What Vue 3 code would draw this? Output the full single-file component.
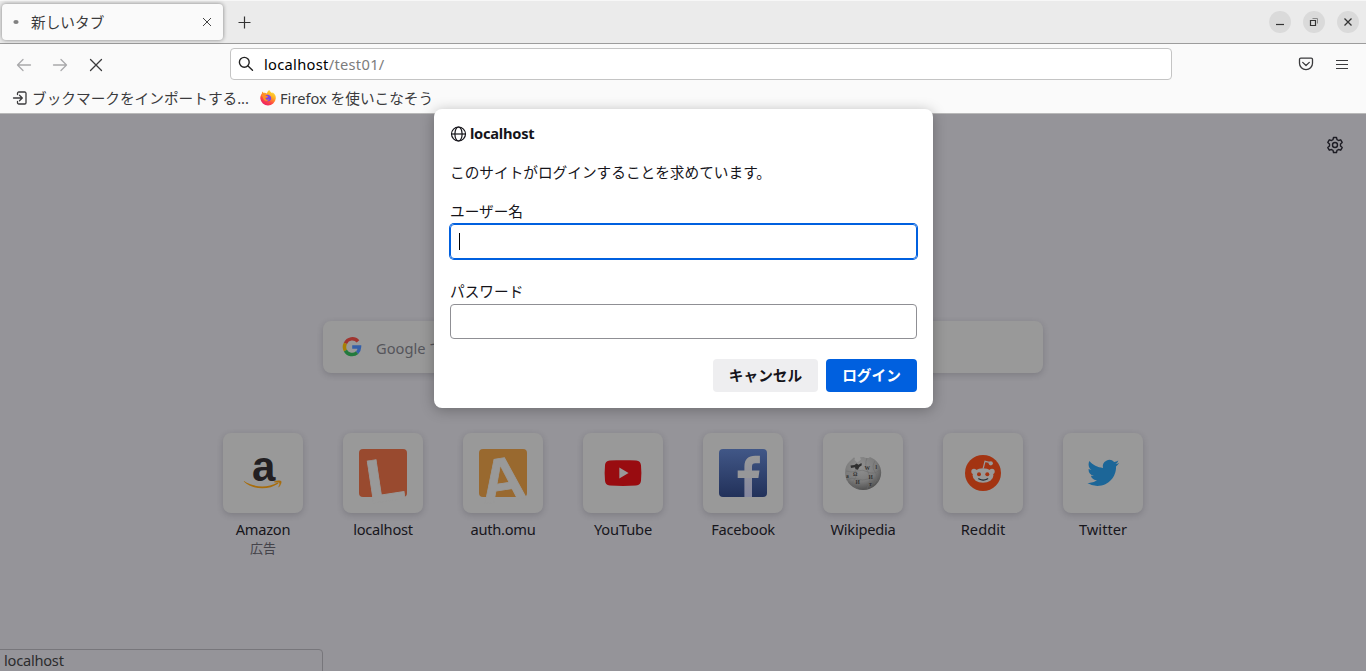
<script setup>
const sites = [
  { id: 'amazon', label: 'Amazon', note: '広告' },
  { id: 'local', label: 'localhost' },
  { id: 'auth', label: 'auth.omu' },
  { id: 'youtube', label: 'YouTube' },
  { id: 'facebook', label: 'Facebook' },
  { id: 'wikipedia', label: 'Wikipedia' },
  { id: 'reddit', label: 'Reddit' },
  { id: 'twitter', label: 'Twitter' },
]
</script>

<template>
  <div class="window">
    <header class="tabbar">
      <div class="tab">
        <svg class="dot" width="8" height="8" viewBox="0 0 8 8"><ellipse cx="4" cy="4" rx="2.600" ry="1.900" fill="#808080" /></svg>
        <span class="tab-title">新しいタブ</span>
        <svg width="10" height="10" viewBox="0 0 10 10" fill="none" stroke="#444" stroke-width="1"><path d="M1 1l8 8M9 1L1 9" /></svg>
      </div>
      <svg class="newtab" width="13" height="13" viewBox="0 0 13 13" fill="none" stroke="#333" stroke-width="1.200"><path d="M6.500 .5v12M.5 6.500h12" /></svg>
      <div class="controls">
        <span class="ctl"><svg width="10" height="10" viewBox="0 0 10 10" stroke="#333" stroke-width="1.200"><path d="M1 7.500h8" /></svg></span>
        <span class="ctl"><svg width="10" height="10" viewBox="0 0 10 10" fill="none" stroke="#333"><path d="M3.500 1.500h5v5" stroke="#888" /><path d="M1.500 3.500h5v5h-5z" stroke-width="1.200" /></svg></span>
        <span class="ctl"><svg width="10" height="10" viewBox="0 0 10 10" fill="none" stroke="#333" stroke-width="1.300"><path d="M1.500 1.500l7 7M8.500 1.500l-7 7" /></svg></span>
      </div>
    </header>

    <div class="navbar">
      <svg class="back" width="16" height="16" viewBox="0 0 16 16" fill="none" stroke="#a9a9ab" stroke-width="1.300" stroke-linecap="round" stroke-linejoin="round"><path d="M14.500 8H1.500M7 2.500L1.500 8 7 13.500" /></svg>
      <svg class="forward" width="16" height="16" viewBox="0 0 16 16" fill="none" stroke="#a9a9ab" stroke-width="1.300" stroke-linecap="round" stroke-linejoin="round"><path d="M1.500 8h13M9 2.500L14.500 8 9 13.500" /></svg>
      <svg class="stop" width="14" height="14" viewBox="0 0 14 14" fill="none" stroke="#3a3a3c" stroke-width="1.300" stroke-linecap="round"><path d="M1.500 1.500l11 11M12.500 1.500l-11 11" /></svg>
      <div class="urlbar">
        <svg width="16" height="16" viewBox="0 0 16 16" fill="none" stroke="#222" stroke-width="1.400" stroke-linecap="round"><circle cx="6.300" cy="6.300" r="4.900" /><path d="M10 10l4.500 4.300" /></svg>
        <span class="url"><b>localhost</b>/test01/</span>
      </div>
      <svg class="pocket" width="16" height="16" viewBox="0 0 16 16" fill="none" stroke="#3a3a3c" stroke-width="1.300" stroke-linecap="round" stroke-linejoin="round"><path d="M2.800 2.100h10.400a1.300 1.300 0 0 1 1.300 1.300v3.800a6.500 6.500 0 0 1-13 0V3.400a1.300 1.300 0 0 1 1.300-1.300z" /><path d="M4.700 6.400L8 9.500l3.300-3.100" /></svg>
      <svg class="menu" width="14" height="12" viewBox="0 0 14 12" stroke="#3a3a3c" stroke-width="1.200"><path d="M1 1.500h12M1 5.500h12M1 9.500h12" /></svg>
    </div>

    <div class="bookmarks">
      <svg class="import" width="16" height="16" viewBox="0 0 16 16" fill="none" stroke="#3a3a3c" stroke-width="1.300" stroke-linecap="round" stroke-linejoin="round"><path d="M5.500 4.500V3.300a1.300 1.300 0 0 1 1.300-1.300h5.900A1.300 1.300 0 0 1 14 3.300v9.400a1.300 1.300 0 0 1-1.300 1.300H6.800a1.300 1.300 0 0 1-1.300-1.300v-1.200M1.500 8h8.500M7.500 5.300L10.300 8l-2.800 2.700" /></svg>
      <span class="bm-import">ブックマークをインポートする...</span>
      <svg class="fox" width="16" height="16" viewBox="0 0 16 16">
        <defs><linearGradient id="fx" x1=".8" y1="0" x2=".2" y2="1"><stop offset="0" stop-color="#ffe93b" /><stop offset=".35" stop-color="#ffad22" /><stop offset=".65" stop-color="#ff4f40" /><stop offset="1" stop-color="#e8146f" /></linearGradient></defs>
        <path d="M9.400 0c.4 1.500 1.700 2.300 2.800 3.200l.4-.9c2.600 1.900 3.400 4 3.200 6.300a7.800 7.800 0 0 1-15.500-.1C.2 6.300 1 4.500 1.900 3.400l.2-1.800 1.700 1.300c1.200-.2 2.200 0 3.100.5C7.400 1.800 8.200.6 9.400 0z" fill="url(#fx)" />
        <path d="M5.300 5.500c1-.8 2.300-.9 3.500-.4 1.900.7 2.700 2.100 2.300 3.900-.5 1.900-2.700 2.800-4.700 2.100C4.600 10.400 3.700 8.800 4.200 7l2.300.7c1.300-.1 2-.7 1-1.100z" fill="#7c45e5" />
        <path d="M1.200 5c1.700-.7 2.900-.2 4.100.6l2.500.7c-.2.9-1.500 1.100-2.300 1.700.1 1.600 2 2.300 3.700 1.300-1 1.900-3.700 2.200-5.100.7C2.900 8.700 3.200 6.900 1.200 5z" fill="#ff9123" />
      </svg>
      <span class="bm-fox">Firefox を使いこなそう</span>
    </div>

    <main class="page">
      <svg class="gear" width="18" height="18" viewBox="0 0 18 18" fill="none" stroke="#1d1c24" stroke-width="1.400" stroke-linejoin="round"><path d="M7.500 1.500h3l.5 2.200 1.500.8 2.200-.7 1.500 2.600-1.700 1.500v2.200l1.700 1.500-1.500 2.600-2.200-.7-1.500.8-.5 2.200h-3L7 14.300l-1.500-.8-2.200.7-1.500-2.600 1.700-1.500V7.900L1.800 6.400l1.500-2.600 2.200.7L7 3.700z" /><circle cx="9" cy="9" r="2.500" /></svg>

      <div class="search">
        <svg width="20" height="20" viewBox="0 0 20 20" fill="none" stroke-width="3.500">
          <path d="M16 4.400A7.500 7.500 0 0 0 3.400 6.400" stroke="#a03530" />
          <path d="M3.400 6.400a7.500 7.500 0 0 0 0 7.200" stroke="#a88004" />
          <path d="M3.400 13.600A7.500 7.500 0 0 0 15.100 15.600" stroke="#237a3d" />
          <path d="M15.100 15.600c1.500-1.300 2.300-3 2.400-5.600H10.200" stroke="#345fa8" />
        </svg>
        <span>Google で</span>
      </div>

      <div class="sites">
        <div v-for="s in sites" :key="s.id" class="site">
          <div class="tile">
            <svg v-if="s.id === 'amazon'" class="logo" width="48" height="48" viewBox="0 0 48 48">
              <text class="amz" x="24.800" y="31.700" text-anchor="middle">a</text>
              <path d="M5 32c10 6.500 23 7.500 33.500 1.500l1 1C29 41.500 14 41 4.800 32.500z" fill="#a86d0c" />
              <path d="M35.500 32.600c2.500-1.200 6-1.100 6.600-.3.500.8-.3 3.800-2.500 5.900 1-2.500 1.400-3.900.8-4.500-.6-.6-2.800-.6-4.900-.5z" fill="#a86d0c" stroke="#a86d0c" stroke-width=".4" />
            </svg>
            <svg v-else-if="s.id === 'local'" class="logo" width="48" height="48" viewBox="0 0 48 48">
              <rect width="48" height="48" rx="4" fill="#994a2f" />
              <g transform="translate(8.200 12) rotate(-8.600)"><text class="mark" x="-4.200" y="42.700">L</text></g>
            </svg>
            <svg v-else-if="s.id === 'auth'" class="logo" width="48" height="48" viewBox="0 0 48 48">
              <rect width="48" height="48" rx="4" fill="#99692f" />
              <g transform="translate(20.300 9.500) rotate(-8.600)"><text class="mark" y="42.700" text-anchor="middle">A</text></g>
            </svg>
            <svg v-else-if="s.id === 'youtube'" width="48" height="48" viewBox="0 0 48 48">
              <path d="M11 11.600c8-.6 18-.6 26 0 3.500.3 4.700 2 5 5 .5 5 .5 10 0 15-.3 3-1.500 4.700-5 5-8 .6-18 .6-26 0-3.500-.3-4.700-2-5-5-.5-5-.5-10 0-15 .3-3 1.500-4.700 5-5z" fill="#990c10" />
              <path d="M20.300 18.600v11l9.300-5.500z" fill="#999" />
            </svg>
            <svg v-else-if="s.id === 'facebook'" class="rounded" width="48" height="48" viewBox="0 0 48 48">
              <defs>
                <linearGradient id="fb" x2="0" y2="1"><stop offset="0" stop-color="#415787" /><stop offset="1" stop-color="#22315a" /></linearGradient>
                <linearGradient id="fw" gradientUnits="userSpaceOnUse" x1="0" y1="7" x2="0" y2="48"><stop offset="0" stop-color="#999" /><stop offset="1" stop-color="#8587a0" /></linearGradient>
              </defs>
              <rect width="48" height="48" fill="url(#fb)" />
              <path d="M29.200 49V17.500q0-7 7-7h4.700" fill="none" stroke="url(#fw)" stroke-width="7.600" />
              <path d="M18.700 21.600h21.800l-1.100 7.500H18.700z" fill="#979799" />
            </svg>
            <svg v-else-if="s.id === 'wikipedia'" width="48" height="48" viewBox="0 0 48 48">
              <defs><radialGradient id="wk" cx=".42" cy=".3" r=".75"><stop offset="0" stop-color="#919191" /><stop offset=".6" stop-color="#7b7b7b" /><stop offset="1" stop-color="#494949" /></radialGradient></defs>
              <path d="M10.500 12.500l4-3.800c1.300-.7 1.900.8.900 2.200l3 2.500 3.600-2.800-1-2.400 3.500-.2c1.800 1.500 5.300 1.500 6.500-.1 6.700 2.700 11.200 8.500 11.200 15.500A17.700 17.700 0 0 1 24 41 17.900 17.900 0 0 1 6 23.700c0-5 1.500-8.500 4.500-11.200z" fill="url(#wk)" />
              <path d="M11.500 16.500l4-.5 2-1.500 2 1.200 3-1.800.3 2.400-2.500 1.700-1.300 2.800-2.500-.5-.5-2-4 .8z" fill="#303030" />
              <path d="M7 22q5 2 11 0t11 1 12-2M7 31q5-3 11-1t11 0 10 2M16 21q3 5-1 10t4 9M28 9q-3 7 1 14t-1 17M36 12q-4 6 0 11t-1 12" fill="none" stroke="#6a6a6a" stroke-width=".5" />
              <g class="runes"><text x="14" y="26.500">Ω</text><text x="25.500" y="21">W</text><text x="29.500" y="30">И</text><text x="16.500" y="35">И</text><text x="7" y="29">a</text><text x="30" y="37">т</text><text x="36.500" y="20">l</text></g>
            </svg>
            <svg v-else-if="s.id === 'reddit'" width="48" height="48" viewBox="0 0 48 48">
              <circle cx="24" cy="24" r="18" fill="#a33412" />
              <g fill="#999"><circle cx="15" cy="22.500" r="2.700" /><circle cx="33" cy="22.500" r="2.700" /><ellipse cx="24" cy="26.500" rx="10.400" ry="7.300" /><circle cx="31.800" cy="14.300" r="2.100" /></g>
              <path d="M24.200 19.500L26 12.300l5.500 1.400" fill="none" stroke="#999" stroke-width="1.200" />
              <circle cx="20" cy="25.300" r="2" fill="#a33412" /><circle cx="28.300" cy="25.300" r="2" fill="#a33412" />
              <path d="M19.700 29.800q4.500 2.600 9 0" fill="none" stroke="#1d2830" stroke-width="1.200" stroke-linecap="round" />
            </svg>
            <svg v-else width="48" height="48" viewBox="0 0 48 48">
              <svg x="8.300" y="7.900" width="32" height="32" viewBox="0 0 24 24"><path d="M23.950 4.570a10 10 0 0 1-2.820.77 4.960 4.960 0 0 0 2.160-2.720c-.95.550-2 .950-3.130 1.180a4.920 4.920 0 0 0-8.380 4.480C7.690 8.090 4.070 6.130 1.640 3.160a4.820 4.820 0 0 0-.67 2.480c0 1.710.87 3.210 2.190 4.100a4.900 4.900 0 0 1-2.230-.62v.06a4.920 4.920 0 0 0 3.950 4.830 4.990 4.990 0 0 1-2.210.080 4.940 4.940 0 0 0 4.600 3.420A9.870 9.870 0 0 1 0 19.540a13.990 13.990 0 0 0 7.560 2.210c9.050 0 14-7.500 14-13.980 0-.21 0-.42-.020-.63a9.940 9.940 0 0 0 2.410-2.570z" fill="#1c6698" /></svg>
            </svg>
          </div>
          <span class="label" :class="'l-' + s.id">{{ s.label }}</span>
          <span v-if="s.note" class="note">{{ s.note }}</span>
        </div>
      </div>
      <div class="status">localhost</div>
    </main>

    <section class="dialog">
      <div class="host">
        <svg width="17" height="16" viewBox="0 0 17 16" fill="none" stroke="#15141a" stroke-width="1.200"><circle cx="8.500" cy="8" r="7" /><ellipse cx="8.500" cy="8" rx="3.600" ry="7" /><path d="M1.500 8h14" /></svg>
        <span>localhost</span>
      </div>
      <p class="message">このサイトがログインすることを求めています。</p>
      <div class="field-label">ユーザー名</div>
      <div class="field focused"><span class="caret"></span></div>
      <div class="field-label second">パスワード</div>
      <div class="field"></div>
      <div class="actions">
        <button class="cancel">キャンセル</button>
        <button class="login">ログイン</button>
      </div>
    </section>
  </div>
</template>

<style>
body { margin: 0; overflow: hidden; }
</style>

<style scoped>
* { box-sizing: border-box; }
.window {
  position: relative;
  display: flex;
  flex-direction: column;
  width: 1366px;
  height: 671px;
  overflow: hidden;
  font: 14.667px/20px "Noto Sans", "Noto Sans CJK JP", sans-serif;
  color: #3b3b3d;
  background: #fafafa;
}
svg { display: block; flex: none; }
.tabbar {
  display: flex;
  height: 44px;
  align-items: flex-start;
  background: #ebebeb;
  border-top: 1px solid #f7f7f7;
  border-bottom: 1px solid #9c9c9c;
}
.tab {
  display: flex;
  align-items: center;
  width: 221px;
  height: 36px;
  margin: 3px 0 0 2px;
  padding: 0 11px 0 10px;
  border-radius: 4px;
  background: #fafafa;
  box-shadow: 0 0 4px rgba(0, 0, 0, .45);
}
.tab-title { flex: 1; margin-left: 11px; }
.newtab { margin: 15px 0 0 15px; }
.controls { display: flex; gap: 12px; margin: 10px 7px 0 auto; }
.ctl {
  display: flex;
  align-items: center;
  justify-content: center;
  width: 22px;
  height: 22px;
  border-radius: 50%;
  background: #dadada;
}
.navbar { display: flex; align-items: center; height: 40px; padding-top: 1px; }
.back { margin-left: 16px; }
.forward { margin-left: 20px; }
.stop { margin-left: 21px; }
.urlbar {
  display: flex;
  align-items: center;
  width: 942px;
  height: 32px;
  margin-left: 127px;
  margin-bottom: 1px;
  padding-left: 7px;
  border: 1px solid #c4c4c4;
  border-radius: 4px;
  background: #fff;
}
.url { margin-left: 10px; color: #7c7c7c; letter-spacing: .3px; }
.url b { font-weight: 400; color: #000; }
.pocket { margin: 0 0 2px 126px; }
.menu { margin-left: 21px; }
.bookmarks { display: flex; align-items: center; height: 30px; padding: 0 0 1px 12px; border-bottom: 1px solid #b9b9b9; }
.bm-import { margin: 0 0 1px 4px; width: 217px; white-space: nowrap; }
.fox { margin-left: 11px; }
.bm-fox { margin: 0 0 1px 4px; white-space: nowrap; }
.page { flex: 1; position: relative; display: flex; flex-direction: column; align-items: center; background: #959499; color: #17161c; }
.gear { align-self: flex-end; margin: 22px 22px 0 0; }
.search {
  display: flex;
  align-items: center;
  width: 720px;
  height: 52px;
  margin-top: 167px;
  padding-left: 19px;
  border-radius: 8px;
  background: #999;
  color: #55555b;
  box-shadow: 0 2px 6px rgba(30, 29, 40, .2);
}
.search span { margin: 1px 0 0 14px; }
.sites { display: flex; gap: 40px; margin-top: 60px; }
.site { display: flex; flex-direction: column; align-items: center; width: 80px; }
.tile {
  display: flex;
  align-items: center;
  justify-content: center;
  width: 80px;
  height: 80px;
  border-radius: 8px;
  background: #999;
  box-shadow: 0 2px 6px rgba(30, 29, 40, .2);
}
.rounded { border-radius: 4px; }
.logo { overflow: visible; }
.mark { font: 700 62px "Liberation Sans", sans-serif; fill: #999; stroke: #999; stroke-width: .8px; }
.amz { font: 700 42px "Liberation Sans", sans-serif; fill: #231f22; }
.runes { font: 700 5.500px "Liberation Serif", serif; fill: #303030; }
.label { margin-top: 6px; white-space: nowrap; letter-spacing: -.25px; }
.l-youtube, .l-localhost { letter-spacing: -.15px; }
.l-reddit, .l-twitter { letter-spacing: 0; }
.note { font-size: 13px; line-height: 18px; color: #44434a; }
.status {
  position: absolute;
  left: -1px;
  bottom: -1px;
  width: 324px;
  height: 23px;
  padding-left: 4px;
  border: 1px solid #77767b;
  border-top-right-radius: 4px;
  line-height: 20px;
  letter-spacing: -.25px;
  color: #2c2c2e;
}
.dialog {
  position: absolute;
  left: 434px;
  top: 109px;
  width: 499px;
  height: 299px;
  padding: 14px 16px 16px;
  border-radius: 8px;
  background: #fff;
  color: #15141a;
  box-shadow: 0 2px 14px rgba(0, 0, 0, .28);
}
.host { display: flex; align-items: center; gap: 3px; height: 20px; font-weight: 700; letter-spacing: -.25px; }
.host svg { margin-top: 1px; }
.message { margin: 19px 0 0; line-height: 20px; }
.field-label { margin-top: 19px; height: 20px; }
.field { width: 467px; height: 35px; margin-top: 3px; padding: 8px; border: 1px solid #8f8f94; border-radius: 4px; }
.focused { border-color: #0060df; box-shadow: 0 0 0 1px #0060df; }
.caret { display: block; width: 1px; height: 17px; background: #000; }
.second { margin-top: 22px; }
.actions { display: flex; justify-content: flex-end; gap: 8px; margin-top: 20px; }
button { height: 33px; padding: 0 0 2px; border: 0; border-radius: 4px; font: inherit; font-weight: 700; }
.cancel { width: 105px; background: #eeeef0; color: #15141a; }
.login { width: 91px; background: #0060df; color: #fff; }
</style>
